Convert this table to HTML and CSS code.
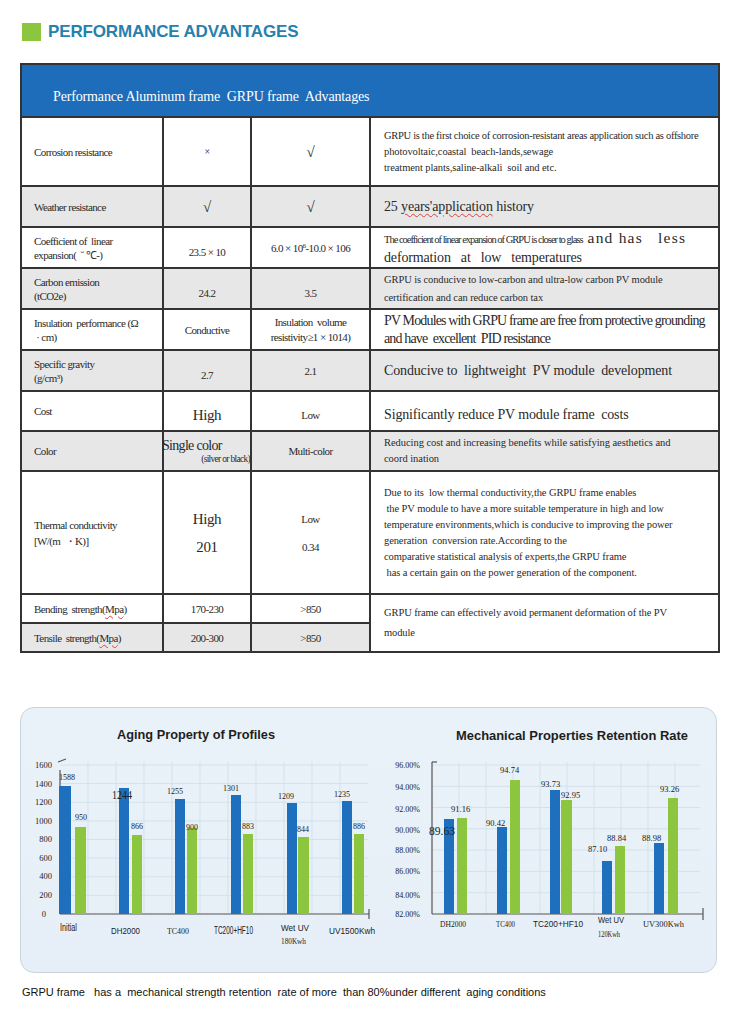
FILE: index.html
```html
<!DOCTYPE html>
<html>
<head>
<meta charset="utf-8">
<link rel="stylesheet" href="styles.css">
</head>
<body>
<div class="page">
  <div class="title">
    <span class="title-mark"></span>
    <span class="title-text">PERFORMANCE ADVANTAGES</span>
  </div>

  <table class="spec">
    <colgroup>
      <col class="c1"><col class="c2"><col class="c3"><col class="c4">
    </colgroup>
    <tr class="head"><td colspan="4">Performance Aluminum frame&nbsp; GRPU frame&nbsp; Advantages</td></tr>
    <tr class="r69">
      <td class="k">Corrosion resistance</td>
      <td class="v x">×</td>
      <td class="v ck">√</td>
      <td class="d s lh16"><span class="tight1">GRPU is the first choice of corrosion-resistant areas application such as offshore</span><br>photovoltaic,coastal&nbsp; beach-lands,sewage<br>treatment plants,saline-alkali&nbsp; soil and etc.</td>
    </tr>
    <tr class="r41 g">
      <td class="k">Weather resistance</td>
      <td class="v ck">√</td>
      <td class="v ck">√</td>
      <td class="d l">25 <span class="sp">years'application</span> history</td>
    </tr>
    <tr class="r41">
      <td class="k">Coefficient of&nbsp; linear<br>expansion(&nbsp; ˘&nbsp;℃-)</td>
      <td class="v lowv">23.5 × 10</td>
      <td class="v">6.0 × 10<sup>6</sup>-10.0 × 106</td>
      <td class="d l lh18"><span class="tiny">The coefficient of linear expansion of GRPU is closer to glass</span><span class="wide"> and has&nbsp;&nbsp; less</span><br>deformation&nbsp;&nbsp; at&nbsp;&nbsp; low&nbsp;&nbsp; temperatures</td>
    </tr>
    <tr class="r41 g">
      <td class="k">Carbon emission<br>(tCO2e)</td>
      <td class="v lowv">24.2</td>
      <td class="v lowv">3.5</td>
      <td class="d s lh18">GRPU is conducive to low-carbon and ultra-low carbon PV module<br>certification and can reduce carbon tax</td>
    </tr>
    <tr class="r41">
      <td class="k">Insulation&nbsp; performance (Ω<br>&nbsp;· cm)</td>
      <td class="v">Conductive</td>
      <td class="v lh15">Insulation&nbsp; volume<br>resistivity≥1 × 1014)</td>
      <td class="d l lt lh18">PV Modules with GRPU frame are free from protective grounding<br>and have&nbsp; excellent&nbsp; PID resistance</td>
    </tr>
    <tr class="r41 g">
      <td class="k">Specific gravity<br>(g/cm³)</td>
      <td class="v lowv">2.7</td>
      <td class="v">2.1</td>
      <td class="d l">Conducive to&nbsp; lightweight&nbsp; PV module&nbsp; development</td>
    </tr>
    <tr class="r40">
      <td class="k">Cost</td>
      <td class="v big lowv">High</td>
      <td class="v lowv">Low</td>
      <td class="d l lowv">Significantly reduce PV module frame&nbsp; costs</td>
    </tr>
    <tr class="r40 g">
      <td class="k">Color</td>
      <td class="v color"><div class="sc1">Single color</div><div class="sc2">(silver or black)</div></td>
      <td class="v">Multi-color</td>
      <td class="d xs lh16">Reducing cost and increasing benefits while satisfying aesthetics and<br>coord ination</td>
    </tr>
    <tr class="r123">
      <td class="k lh16">Thermal conductivity<br>[W/(m&nbsp; ・K)]</td>
      <td class="v big"><div class="pair1">High</div><div>201</div></td>
      <td class="v"><div class="pair2">Low</div><div>0.34</div></td>
      <td class="d s lh16">Due to its&nbsp; low thermal conductivity,the GRPU frame enables<br>&nbsp;the PV module to have a more suitable temperature in high and low<br>temperature environments,which is conducive to improving the power<br>generation&nbsp; conversion rate.According to the<br>comparative statistical analysis of experts,the GRPU frame<br>&nbsp;has a certain gain on the power generation of the component.</td>
    </tr>
    <tr class="r29">
      <td class="k">Bending&nbsp; strength(<span class="sp">Mpa</span>)</td>
      <td class="v">170-230</td>
      <td class="v">&gt;850</td>
      <td class="d s lh20" rowspan="2">GRPU frame can effectively avoid permanent deformation of the PV<br>module</td>
    </tr>
    <tr class="r29 g">
      <td class="k">Tensile&nbsp; strength(<span class="sp">Mpa</span>)</td>
      <td class="v">200-300</td>
      <td class="v">&gt;850</td>
    </tr>
  </table>

  <div class="panel">
    <svg class="charts" width="696" height="266" viewBox="20 705 696 266" xmlns="http://www.w3.org/2000/svg">
      <!-- LEFT CHART -->
      <text class="ctitle" x="117" y="737" textLength="158" lengthAdjust="spacingAndGlyphs">Aging Property of Profiles</text>
      <g class="grid">
        <line x1="60" y1="893.4" x2="368" y2="893.4"/>
        <line x1="60" y1="874.75" x2="368" y2="874.75"/>
        <line x1="60" y1="856.1" x2="368" y2="856.1"/>
        <line x1="60" y1="837.5" x2="368" y2="837.5"/>
        <line x1="60" y1="818.9" x2="368" y2="818.9"/>
        <line x1="60" y1="800.25" x2="368" y2="800.25"/>
        <line x1="60" y1="781.6" x2="368" y2="781.6"/>
        <line x1="60" y1="763" x2="368" y2="763"/>
        <line x1="88" y1="760" x2="88" y2="912"/>
        <line x1="116" y1="760" x2="116" y2="912"/>
        <line x1="144" y1="760" x2="144" y2="912"/>
        <line x1="172" y1="760" x2="172" y2="912"/>
        <line x1="200" y1="760" x2="200" y2="912"/>
        <line x1="228" y1="760" x2="228" y2="912"/>
        <line x1="256" y1="760" x2="256" y2="912"/>
        <line x1="284" y1="760" x2="284" y2="912"/>
        <line x1="312" y1="760" x2="312" y2="912"/>
        <line x1="340" y1="760" x2="340" y2="912"/>
      </g>
      <g class="ylab" text-anchor="end">
        <text x="52" y="766">1600</text>
        <text x="52" y="785">1400</text>
        <text x="52" y="803">1200</text>
        <text x="52" y="822">1000</text>
        <text x="52" y="840">800</text>
        <text x="52" y="859">600</text>
        <text x="52" y="877">400</text>
        <text x="52" y="896">200</text>
        <text x="46" y="915">0</text>
      </g>
      <g class="axis">
        <line x1="60" y1="768" x2="60" y2="912"/>
        <line x1="58" y1="760" x2="66" y2="757"/>
        <line x1="60" y1="912" x2="369" y2="912"/>
        <line x1="369" y1="907" x2="369" y2="917"/>
      </g>
      <g class="blue">
        <rect x="59" y="784" width="12" height="128"/>
        <rect x="119" y="786" width="10" height="126"/>
        <rect x="175" y="797" width="10" height="115"/>
        <rect x="231" y="793" width="10" height="119"/>
        <rect x="287" y="801" width="10" height="111"/>
        <rect x="342" y="799" width="10" height="113"/>
      </g>
      <g class="green">
        <rect x="75" y="825" width="11" height="87"/>
        <rect x="132" y="833" width="10" height="79"/>
        <rect x="187" y="826" width="10" height="86"/>
        <rect x="243" y="832" width="10" height="80"/>
        <rect x="298" y="835" width="11" height="77"/>
        <rect x="354" y="832" width="10" height="80"/>
      </g>
      <g class="vlab">
        <text x="59" y="778">1588</text>
        <text x="112" y="797" class="vbig" textLength="20" lengthAdjust="spacingAndGlyphs">1244</text>
        <text x="167" y="792">1255</text>
        <text x="223" y="789">1301</text>
        <text x="278" y="797">1209</text>
        <text x="334" y="795">1235</text>
        <text x="75" y="818">950</text>
        <text x="131" y="827">866</text>
        <text x="186" y="828">900</text>
        <text x="242" y="827">883</text>
        <text x="297" y="830">844</text>
        <text x="353" y="827">886</text>
      </g>
      <g class="xlab">
        <text x="60" y="929" class="sans big" textLength="17" lengthAdjust="spacingAndGlyphs">Initial</text>
        <text x="111" y="932" class="sans" textLength="29" lengthAdjust="spacingAndGlyphs">DH2000</text>
        <text x="167" y="932" textLength="22" lengthAdjust="spacingAndGlyphs">TC400</text>
        <text x="214" y="932" class="sans big" textLength="39" lengthAdjust="spacingAndGlyphs">TC200+HF10</text>
        <text x="281" y="929" class="sans" textLength="28" lengthAdjust="spacingAndGlyphs">Wet UV</text>
        <text x="281" y="942" class="sub" textLength="25" lengthAdjust="spacingAndGlyphs">180Kwh</text>
        <text x="329" y="932" class="sans" textLength="46" lengthAdjust="spacingAndGlyphs">UV1500Kwh</text>
      </g>

      <!-- RIGHT CHART -->
      <text class="ctitle" x="456" y="738" textLength="232" lengthAdjust="spacingAndGlyphs">Mechanical  Properties Retention Rate</text>
      <g class="grid">
        <line x1="432" y1="890.7" x2="700" y2="890.7"/>
        <line x1="432" y1="869.4" x2="700" y2="869.4"/>
        <line x1="432" y1="848.1" x2="700" y2="848.1"/>
        <line x1="432" y1="826.8" x2="700" y2="826.8"/>
        <line x1="432" y1="805.5" x2="700" y2="805.5"/>
        <line x1="432" y1="784.3" x2="700" y2="784.3"/>
        <line x1="432" y1="763" x2="700" y2="763"/>
        <line x1="459" y1="760" x2="459" y2="912"/>
        <line x1="486" y1="760" x2="486" y2="912"/>
        <line x1="513" y1="760" x2="513" y2="912"/>
        <line x1="540" y1="760" x2="540" y2="912"/>
        <line x1="567" y1="760" x2="567" y2="912"/>
        <line x1="594" y1="760" x2="594" y2="912"/>
        <line x1="621" y1="760" x2="621" y2="912"/>
        <line x1="648" y1="760" x2="648" y2="912"/>
        <line x1="675" y1="760" x2="675" y2="912"/>
      </g>
      <g class="ylab small" text-anchor="end">
        <text x="420" y="766">96.00%</text>
        <text x="420" y="788">94.00%</text>
        <text x="420" y="810">92.00%</text>
        <text x="420" y="831">90.00%</text>
        <text x="420" y="851">88.00%</text>
        <text x="420" y="872">86.00%</text>
        <text x="420" y="896">84.00%</text>
        <text x="420" y="915">82.00%</text>
      </g>
      <g class="axis">
        <line x1="432" y1="760" x2="432" y2="912"/>
        <line x1="432" y1="760" x2="437" y2="760"/>
        <line x1="432" y1="912" x2="703" y2="912"/>
        <line x1="703" y1="906" x2="703" y2="918"/>
      </g>
      <g class="blue">
        <rect x="444" y="817" width="10" height="95"/>
        <rect x="497" y="825" width="10" height="87"/>
        <rect x="550" y="788" width="10" height="124"/>
        <rect x="602" y="859" width="10" height="53"/>
        <rect x="654" y="841" width="10" height="71"/>
      </g>
      <g class="green">
        <rect x="457" y="816" width="10" height="96"/>
        <rect x="510" y="778" width="10" height="134"/>
        <rect x="561" y="798" width="11" height="114"/>
        <rect x="615" y="844" width="10" height="68"/>
        <rect x="668" y="796" width="10" height="116"/>
      </g>
      <g class="vlab r">
        <text x="451" y="810">91.16</text>
        <text x="429" y="833" class="vbig" textLength="26" lengthAdjust="spacingAndGlyphs">89.63</text>
        <text x="500" y="771">94.74</text>
        <text x="486" y="824">90.42</text>
        <text x="541" y="785">93.73</text>
        <text x="561" y="796">92.95</text>
        <text x="588" y="850">87.10</text>
        <text x="607" y="839">88.84</text>
        <text x="642" y="839">88.98</text>
        <text x="660" y="790">93.26</text>
      </g>
      <g class="xlab">
        <text x="440" y="925" textLength="26" lengthAdjust="spacingAndGlyphs">DH2000</text>
        <text x="496" y="925" textLength="19" lengthAdjust="spacingAndGlyphs">TC400</text>
        <text x="533" y="925" class="sans" textLength="50" lengthAdjust="spacingAndGlyphs">TC200+HF10</text>
        <text x="598" y="921" class="sans" textLength="26" lengthAdjust="spacingAndGlyphs">Wet UV</text>
        <text x="598" y="935" class="sub" textLength="22" lengthAdjust="spacingAndGlyphs">120Kwh</text>
        <text x="643" y="925" textLength="41" lengthAdjust="spacingAndGlyphs">UV300Kwh</text>
      </g>
    </svg>
  </div>

  <p class="caption">GRPU frame   has a  mechanical strength retention  rate of more  than 80%under different  aging conditions</p>
</div>
</body>
</html>
```

FILE: styles.css
```css
* { box-sizing: border-box; }

body {
  margin: 0;
  background: #ffffff;
  font-family: "Liberation Serif", "Times New Roman", serif;
  color: #222;
}

.page {
  padding: 22px 18px 0 20px;
}

.title {
  display: flex;
  align-items: center;
  gap: 7px;
  margin-left: 2px;
  height: 19px;
}

.title-mark {
  width: 19px;
  height: 18px;
  background: #8cc63f;
}

.title-text {
  font: bold 17px "Liberation Sans", Arial, sans-serif;
  color: #2781ad;
  letter-spacing: -0.15px;
}

/* ---------- table ---------- */
.spec {
  margin-top: 22px;
  width: 698px;
  border-collapse: collapse;
  table-layout: fixed;
}

.c1 { width: 142px; }
.c2 { width: 88px; }
.c3 { width: 119px; }
.c4 { width: 349px; }

.spec td {
  border: 2px solid #333;
  padding: 0;
  vertical-align: middle;
  font-size: 11px;
  line-height: 14px;
  letter-spacing: -0.6px;
  color: #2a2a2a;
}

.spec .head td {
  height: 53px;
  background: #1d6dba;
  color: #fff;
  font-size: 14px;
  letter-spacing: -0.15px;
  padding: 12px 0 0 31px;
}

.r69 td { height: 69px; }
.r41 td { height: 41px; }
.r40 td { height: 40px; }
.r123 td { height: 123px; }
.r29 td { height: 29px; }

.g td { background: #e7e7e8; }
.g td.d[rowspan] { background: #fff; }

.k {
  text-align: left;
  padding-left: 12px !important;
}

.v {
  text-align: center;
}

.v.x { font-size: 10px; }
.v.ck { font-size: 15px; letter-spacing: 0; }
.v.big { font-size: 15px; letter-spacing: -0.4px; }
.lowv { padding-top: 8px !important; }

.spec sup {
  font-size: 7px;
  line-height: 0;
  vertical-align: 4px;
}

.d {
  text-align: left;
  padding-left: 13px !important;
  white-space: nowrap;
}

.spec td.s { font-size: 10.5px; letter-spacing: -0.1px; }
.spec td.xs { font-size: 10.5px; letter-spacing: -0.05px; }
.spec td.l { font-size: 14px; letter-spacing: -0.15px; }
.spec td.lt { letter-spacing: -0.85px; }
.tight1 { letter-spacing: -0.3px; }
.tiny { font-size: 10.5px; letter-spacing: -1px; }
.wide { font-size: 15.5px; letter-spacing: 1.2px; }

.spec td.lh15 { line-height: 15px; }
.spec td.lh16 { line-height: 16px; }
.spec td.lh18 { line-height: 18px; }
.spec td.lh20 { line-height: 20px; }

.sp {
  text-decoration: underline wavy #d9403a;
  text-decoration-thickness: 1px;
  text-underline-offset: 2px;
}

.color { text-align: left !important; }
.sc1 {
  font-size: 14px;
  letter-spacing: -0.7px;
  line-height: 14px;
  margin-left: -2px;
  padding-top: 2px;
}
.sc2 {
  font-size: 9.5px;
  letter-spacing: -0.7px;
  line-height: 12px;
  text-align: right;
}

.pair1 { margin-bottom: 14px; }
.pair2 { margin-bottom: 14px; }

/* ---------- charts ---------- */
.panel {
  margin-top: 54px;
  width: 697px;
  height: 266px;
  border: 1px solid #c9d5de;
  border-radius: 14px;
  background: linear-gradient(180deg, #eaf2f9 0%, #e6eff7 100%);
}

.charts {
  display: block;
  margin: -1px 0 0 -1px;
  overflow: visible;
}

.ctitle {
  font: bold 13px "Liberation Sans", Arial, sans-serif;
  fill: #1e1e1e;
}

.grid line { stroke: #d3e1ec; stroke-width: 1; }
.axis line { stroke: #555; stroke-width: 1.2; }

.blue rect { fill: #1e6fbe; }
.green rect { fill: #8cc63f; }

.ylab text {
  font: 8.5px "Liberation Serif", serif;
  fill: #222;
}
.ylab.small text { font-size: 8px; }

.vlab text {
  font: 8px "Liberation Serif", serif;
  fill: #222;
}
.vlab.r text { font-size: 8.5px; }
.vlab .vbig { font-size: 12px; }
.vlab.r .vbig { font-size: 12px; }

.xlab text {
  font: 9px "Liberation Serif", serif;
  fill: #222;
}
.xlab .sans { font-family: "Liberation Sans", Arial, sans-serif; font-size: 9px; }
.xlab .sans.big { font-size: 10px; }
.xlab .sub { font-size: 8px; }

.caption {
  margin: 13px 0 0 2px;
  font: 11px "Liberation Sans", Arial, sans-serif;
  letter-spacing: 0;
  white-space: pre;
  color: #111;
}
```
